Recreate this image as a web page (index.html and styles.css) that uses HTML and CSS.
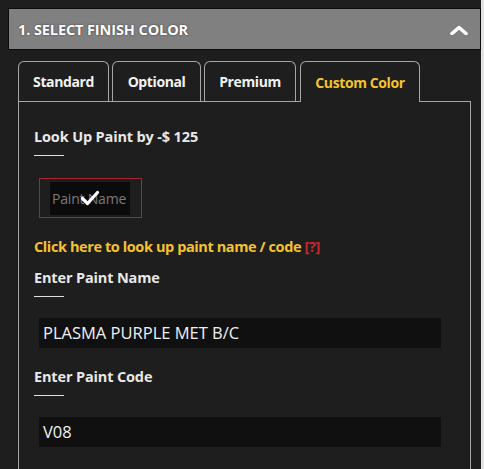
FILE: index.html
```html
<!DOCTYPE html>
<html>
<head>
<meta charset="utf-8">
<link rel="stylesheet" href="styles.css">
</head>
<body>
<div class="page">
  <div class="main">
    <div class="acc-head">
      <span class="acc-title">1. SELECT FINISH COLOR</span>
      <svg class="chev" width="18" height="10" viewBox="0 0 18 10"><polyline points="2,8.5 9,2.5 16,8.5" fill="none" stroke="#fff" stroke-width="3.6" stroke-linecap="round" stroke-linejoin="round"/></svg>
    </div>
    <div class="tabs">
      <div class="tab t1">Standard</div>
      <div class="tab t2">Optional</div>
      <div class="tab t3">Premium</div>
      <div class="tab t4 active">Custom Color</div>
    </div>
    <div class="panel">
      <div class="label">Look Up Paint by -$ 125</div>
      <div class="rule"></div>
      <div class="pick">
        <div class="pick-inner">Paint Name</div>
        <svg class="check" width="20" height="16" viewBox="0 0 20 16"><polyline points="2.5,8.5 7.5,13.5 17.5,2.5" fill="none" stroke="#fff" stroke-width="3.2" stroke-linecap="round" stroke-linejoin="round"/></svg>
      </div>
      <div class="link">Click here to look up paint name / code <span class="q">[?]</span></div>
      <div class="label l2">Enter Paint Name</div>
      <div class="rule"></div>
      <div class="field">PLASMA PURPLE MET B/C</div>
      <div class="label l3">Enter Paint Code</div>
      <div class="rule"></div>
      <div class="field">V08</div>
    </div>
  </div>
  <div class="scroll"></div>
</div>
</body>
</html>
```
FILE: styles.css
```css
html, body {
  margin: 0;
  padding: 0;
  background: #1e1e1e;
  height: 469px;
  overflow: hidden;
}
body {
  font-family: "Open Sans", "Noto Sans", sans-serif;
  color: #e6e6e6;
}
.page {
  display: flex;
  height: 469px;
}
.main {
  flex: 1;
  padding: 8px 0 0 8px;
}
.scroll {
  width: 3px;
  background: #e4e4e4;
}
.acc-head {
  height: 40px;
  border: 1px solid #0c0c0c;
  background: #808080;
  display: flex;
  align-items: center;
  justify-content: space-between;
  padding: 0 12px 0 9px;
}
.acc-title {
  font-weight: 700;
  font-size: 14.5px;
  color: #fff;
  letter-spacing: -0.1px;
  text-shadow: 0 0 2px #333;
}
.chev {
  display: block;
  margin-top: 1px;
}
.tabs {
  display: flex;
  gap: 3px;
  margin: 11px 0 0 10px;
  height: 40px;
}
.tab {
  box-sizing: border-box;
  height: 40px;
  border: 1px solid #a6a6a6;
  border-bottom: none;
  border-radius: 6px 6px 0 0;
  display: flex;
  align-items: center;
  justify-content: center;
  font-weight: 700;
  font-size: 14px;
  letter-spacing: -0.4px;
  color: #f2f2f2;
  background: #1e1e1e;
}
.t1 { width: 91px; }
.t2 { width: 89px; }
.t3 { width: 92px; }
.t4 { width: 120px; margin-left: 1px; }
.tab.active {
  color: #f5c22e;
  height: 41px;
  position: relative;
  z-index: 1;
}
.panel {
  box-sizing: border-box;
  width: 453px;
  margin-left: 10px;
  height: 368px;
  border: 1px solid #a6a6a6;
  border-bottom: none;
  padding: 25px 0 0 15px;
}
.label {
  font-weight: 700;
  font-size: 14.5px;
  line-height: 20px;
  letter-spacing: -0.15px;
  color: #e8e8e8;
}
.rule {
  width: 30px;
  height: 1px;
  background: #e0e0e0;
  margin-top: 8px;
}
.pick {
  box-sizing: border-box;
  width: 103px;
  height: 40px;
  margin: 22px 0 0 5px;
  border: 1px solid #a8242f;
  display: flex;
  align-items: center;
  padding-left: 10px;
  position: relative;
}
.pick-inner {
  width: 80px;
  height: 33px;
  background: #0b0b0b;
  color: #7a7a7a;
  font-size: 14px;
  line-height: 33px;
  padding-left: 2px;
  box-sizing: border-box;
  letter-spacing: -0.2px;
}
.check {
  position: absolute;
  left: 40px;
  top: 11px;
}
.link {
  margin-top: 19px;
  font-weight: 700;
  font-size: 14.5px;
  line-height: 20px;
  letter-spacing: -0.4px;
  color: #f5c22e;
}
.q {
  color: #c42a30;
}
.l2 { margin-top: 11px; }
.l3 { margin-top: 19px; }
.field {
  box-sizing: border-box;
  width: 402px;
  height: 30px;
  margin: 21px 0 0 5px;
  background: #101010;
  color: #f0f0f0;
  font-size: 16.5px;
  line-height: 30px;
  padding-left: 4px;
  letter-spacing: 0;
}
```
